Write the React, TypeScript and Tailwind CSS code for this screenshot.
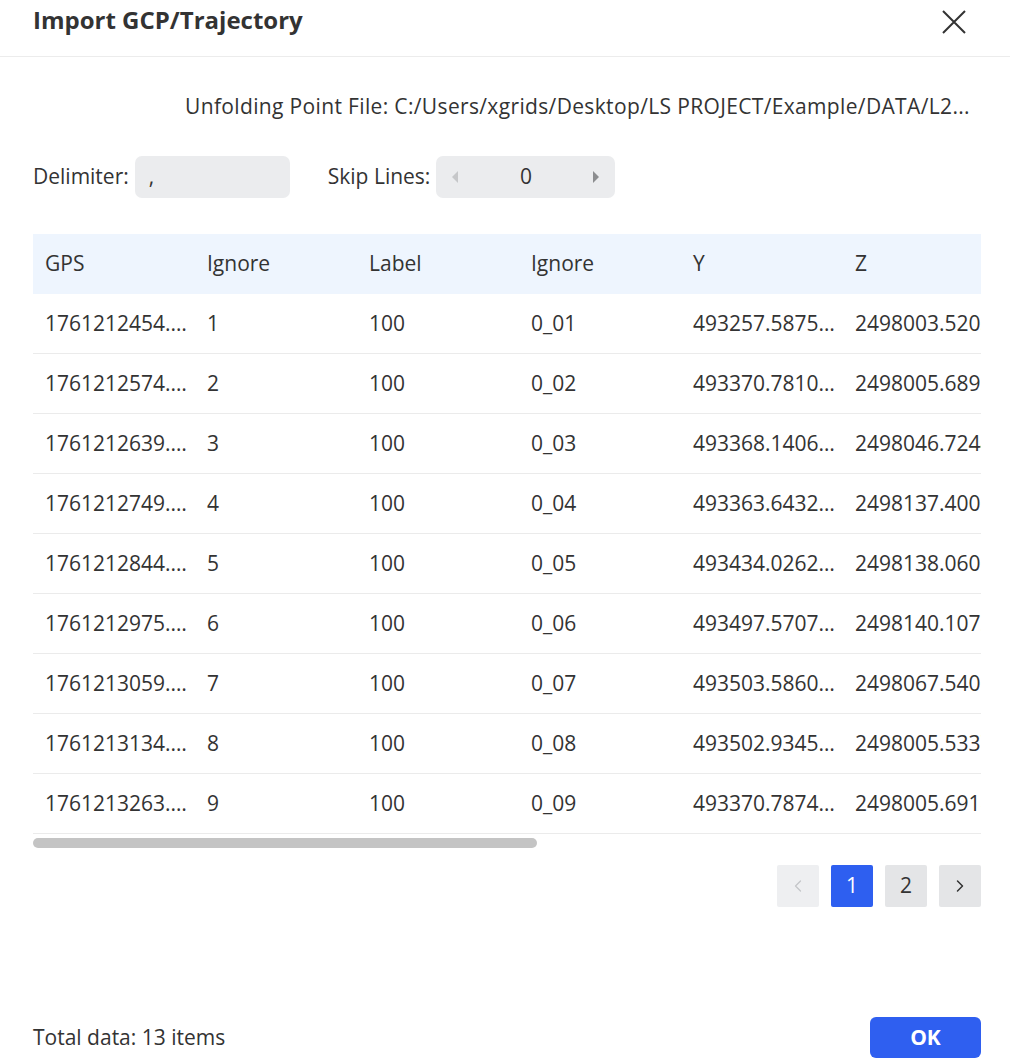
import { ChevronLeft, ChevronRight } from "lucide-react";

const columns = ["GPS", "Ignore", "Label", "Ignore", "Y", "Z", "Ignore", "Ignore"];

const rows = [
  ["1761212454.273910", "1", "100", "0_01", "493257.587522", "2498003.5203", "0", "0"],
  ["1761212574.120384", "2", "100", "0_02", "493370.781034", "2498005.6891", "0", "0"],
  ["1761212639.884120", "3", "100", "0_03", "493368.140627", "2498046.7244", "0", "0"],
  ["1761212749.551207", "4", "100", "0_04", "493363.643218", "2498137.4005", "0", "0"],
  ["1761212844.302918", "5", "100", "0_05", "493434.026259", "2498138.0606", "0", "0"],
  ["1761212975.719033", "6", "100", "0_06", "493497.570716", "2498140.1072", "0", "0"],
  ["1761213059.064521", "7", "100", "0_07", "493503.586042", "2498067.5401", "0", "0"],
  ["1761213134.990412", "8", "100", "0_08", "493502.934523", "2498005.5337", "0", "0"],
  ["1761213263.417760", "9", "100", "0_09", "493370.787412", "2498005.6918", "0", "0"],
];

function App() {
  return (
    <div
      className="w-[1010px] h-[1063px] bg-white text-[#333333] flex flex-col overflow-hidden"
      style={{ fontFamily: '"Open Sans", "Noto Sans", sans-serif' }}
    >
      {/* HEADER */}
      <div className="h-[57px] border-b border-[#ececec] flex items-start justify-between pl-[33px] pr-[44px] pt-[2px]">
        <h1 className="text-[24px] font-bold leading-[36px]">Import GCP/Trajectory</h1>
        <button className="mt-[8px]">
          <svg width="24" height="24" viewBox="0 0 24 24" fill="none" stroke="#333" strokeWidth="2">
            <path d="M1 1 L23 23 M23 1 L1 23" />
          </svg>
        </button>
      </div>

      {/* FILE PATH */}
      <div className="mt-[35px] pr-[40px] text-right text-[21px] leading-[28px] tracking-[0.35px] whitespace-nowrap">
        Unfolding Point File: C:/Users/xgrids/Desktop/LS PROJECT/Example/DATA/L2...
      </div>

      {/* OPTIONS */}
      <div className="mt-[36px] px-[33px] flex items-center text-[21px]">
        <span>Delimiter:</span>
        <div className="ml-[6px] w-[155px] h-[42px] rounded-[7px] bg-[#ebecee] flex items-center px-[14px]">
          ,
        </div>
        <span className="ml-[38px]">Skip Lines:</span>
        <div className="ml-[6px] w-[179px] h-[42px] rounded-[7px] bg-[#ebecee] flex items-center justify-between px-[13px]">
          <svg width="12" height="16" viewBox="0 0 12 16">
            <path d="M9 2 L3 8 L9 14 Z" fill="#c6c7c9" />
          </svg>
          <span>0</span>
          <svg width="12" height="16" viewBox="0 0 12 16">
            <path d="M3 2 L9 8 L3 14 Z" fill="#8c8d8f" />
          </svg>
        </div>
      </div>

      {/* TABLE */}
      <div className="mt-[36px] ml-[33px] mr-[29px] overflow-hidden">
        <div className="w-[1296px] text-[21px]">
          <div className="flex bg-[#eef5fe] h-[60px] items-center">
            {columns.map((c, i) => (
              <div key={i} className="w-[162px] shrink-0 pl-3 pr-[5px] truncate">
                {c}
              </div>
            ))}
          </div>
          {rows.map((r, ri) => (
            <div key={ri} className="flex h-[60px] items-center border-b border-[#ebebeb]">
              {r.map((v, ci) => (
                <div key={ci} className="w-[162px] shrink-0 pl-3 pr-[5px] truncate">
                  {v}
                </div>
              ))}
            </div>
          ))}
        </div>
      </div>

      {/* SCROLLBAR */}
      <div className="mx-[33px] mt-[4px] h-[10px]">
        <div className="w-[504px] h-[10px] rounded-full bg-[#c4c4c4]"></div>
      </div>

      {/* PAGINATION */}
      <div className="mt-[17px] pr-[29px] flex justify-end gap-[12px] text-[21px]">
        <button className="w-[42px] h-[42px] rounded-[2px] bg-[#eeeff1] flex items-center justify-center text-[#c4c6c9]">
          <ChevronLeft size={20} strokeWidth={1.5} />
        </button>
        <button className="w-[42px] h-[42px] rounded-[2px] bg-[#2e5ff0] text-white flex items-center justify-center">
          1
        </button>
        <button className="w-[42px] h-[42px] rounded-[2px] bg-[#e4e5e7] flex items-center justify-center">
          2
        </button>
        <button className="w-[42px] h-[42px] rounded-[2px] bg-[#e4e5e7] flex items-center justify-center text-[#333]">
          <ChevronRight size={20} strokeWidth={1.8} />
        </button>
      </div>

      {/* FOOTER */}
      <div className="mt-auto mb-[5px] pl-[33px] pr-[29px] flex items-center justify-between">
        <span className="text-[21px]">Total data: 13 items</span>
        <button className="w-[111px] h-[41px] rounded-[6px] bg-[#2f5ff0] text-white text-[21px] font-bold">
          OK
        </button>
      </div>
    </div>
  );
}

export default App;
